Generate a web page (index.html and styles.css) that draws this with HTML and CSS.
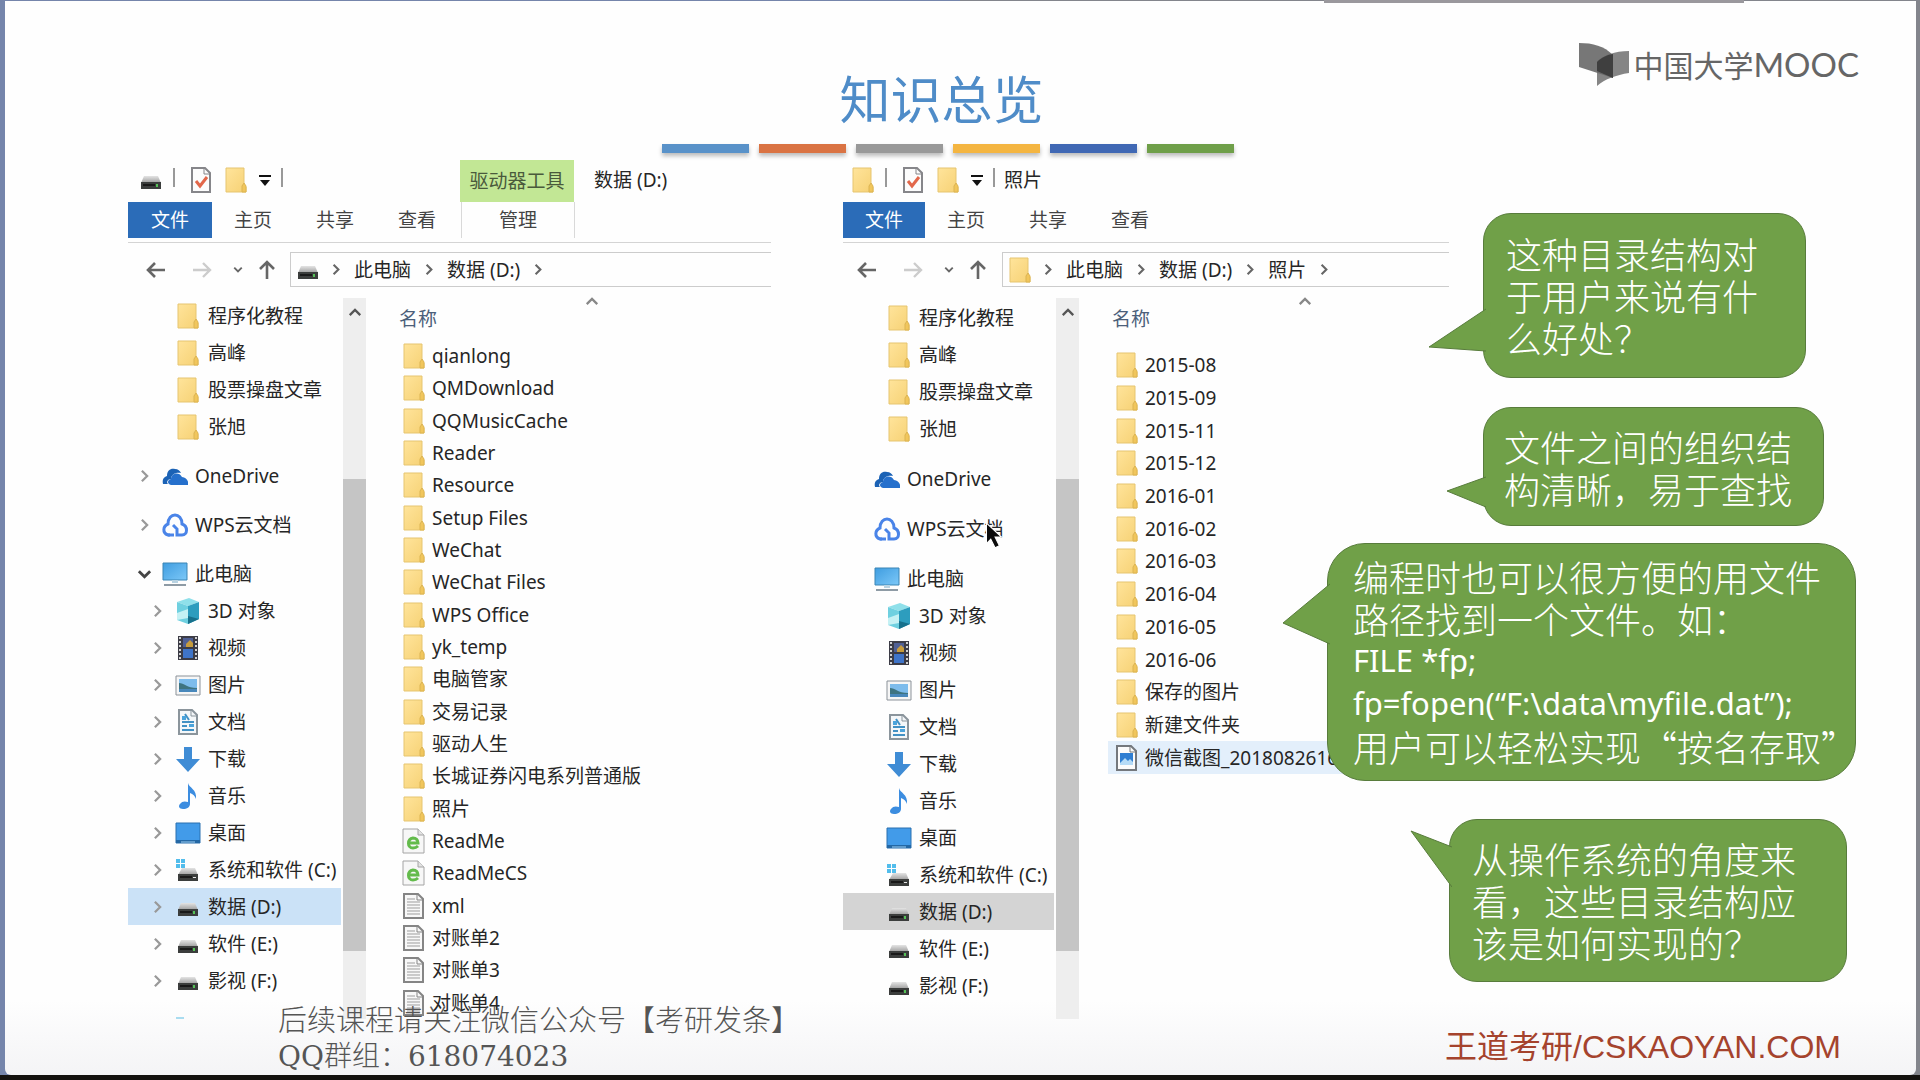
FILE: index.html
```html
<!DOCTYPE html>
<html lang="zh-CN">
<head>
<meta charset="utf-8">
<title>知识总览</title>
<link rel="stylesheet" href="styles.css">
</head>
<body>
<svg class="sprite" aria-hidden="true">
  <defs>
    <linearGradient id="gFolder" x1="0" x2="1" y1="0" y2="1"><stop offset="0" stop-color="#ffe49b"/><stop offset="1" stop-color="#f6d174"/></linearGradient>
    <linearGradient id="gScreen" x1="0" x2="1" y1="0" y2="1"><stop offset="0" stop-color="#3f9de0"/><stop offset="1" stop-color="#7cc8f8"/></linearGradient>
    <linearGradient id="gDrive" x1="0" x2="0" y1="0" y2="1"><stop offset="0" stop-color="#e4e4e4"/><stop offset="1" stop-color="#9c9c9c"/></linearGradient>
    <symbol id="folder" viewBox="0 0 26 26"><path d="M3 1h18v17l2 2v5H3z" fill="url(#gFolder)" stroke="#e6c571"/><path d="M19 25v-6l2-3 2 3v6z" fill="#f1c65c" stroke="#dcb452"/></symbol>
    <symbol id="drive" viewBox="0 0 26 26"><path d="M6 9h14l3 7H3z" fill="url(#gDrive)"/><path d="M3 15h20v7H3z" fill="#3b3d3c"/><path d="M5 17h12v2H5z" fill="#191919"/><path d="M18 17h2v3h-2z" fill="#55c257"/></symbol>
    <symbol id="sysdrive" viewBox="0 0 26 26"><path d="M1 2h4v4H1zM6 2h4v4H6zM1 7h4v4H1zM6 7h4v4H6z" fill="#52bdec"/><path d="M7 11h13l3 7H3z" fill="url(#gDrive)"/><path d="M3 17h20v7H3z" fill="#3b3d3c"/><path d="M5 19h12v2H5z" fill="#191919"/><path d="M18 20h3v1h-3z" fill="#e6e6e6"/></symbol>
    <symbol id="check" viewBox="0 0 26 26"><path d="M4 1h13l5 5v19H4z" fill="#fcfcfc" stroke="#86868a" stroke-width="2"/><path d="M16 1v6h6" fill="none" stroke="#86868a" stroke-width="1"/><path d="M8 14l4 5 7-9" fill="none" stroke="#e2674a" stroke-width="3"/></symbol>
    <symbol id="caret" viewBox="0 0 14 14"><path d="M1 3h12" stroke="#111" stroke-width="2"/><path d="M2 7h10l-5 6z" fill="#111"/></symbol>
    <symbol id="back" viewBox="0 0 20 20"><path d="M19 10H2M9 3l-7 7 7 7" fill="none" stroke="currentColor" stroke-width="2.6"/></symbol>
    <symbol id="fwd" viewBox="0 0 20 20"><path d="M1 10h17M11 3l7 7-7 7" fill="none" stroke="currentColor" stroke-width="2.4"/></symbol>
    <symbol id="up" viewBox="0 0 20 20"><path d="M10 19V2M3 9l7-7 7 7" fill="none" stroke="currentColor" stroke-width="2.6"/></symbol>
    <symbol id="right" viewBox="0 0 10 16"><path d="M2 2l6 6-6 6" fill="none" stroke="currentColor" stroke-width="2.6"/></symbol>
    <symbol id="down" viewBox="0 0 16 10"><path d="M2 2l6 6 6-6" fill="none" stroke="currentColor" stroke-width="3"/></symbol>
    <symbol id="top" viewBox="0 0 16 10"><path d="M2 8l6-6 6 6" fill="none" stroke="currentColor" stroke-width="2.6"/></symbol>
    <symbol id="onedrive" viewBox="0 0 26 26"><path d="M1 21c-1-5 1-7 4-8 0-6 4-8 8-7 3 0 5 2 6 4-6-1-10 2-10 6-3 0-5 3-3 5z" fill="#1b62b5"/><path d="M9 22c-4-1-4-5 0-6 0-6 8-8 11-2 4 0 7 4 6 8z" fill="#2670cc"/></symbol>
    <symbol id="wps" viewBox="0 0 26 26"><path d="M8 23H6c-6-2-5-9 0-11C6 0 20 0 20 12c6 2 6 11 0 11h-5v-6l-4-4" fill="none" stroke="#4a84e8" stroke-width="3"/><path d="M6 23h6" stroke="#4a84e8" stroke-width="3"/></symbol>
    <symbol id="pc" viewBox="0 0 26 26"><path d="M1 2h24v17H1z" fill="url(#gScreen)" stroke="#3a85b5"/><path d="M10 19h6v3h-6z" fill="#b9d3e2"/><path d="M2 23h22v2H2z" fill="#8e9ba5"/></symbol>
    <symbol id="cube" viewBox="0 0 26 26"><path d="M2 4l12-4 10 4-11 4z" fill="#8fe0ea"/><path d="M2 4l11 4v18L2 22z" fill="#6fd0e0"/><path d="M13 8l11-4v17l-11 5z" fill="#2d9dbe"/><path d="M2 15l11-4v9L2 22z" fill="#c5f1f4"/><path d="M13 18l11 3-11 5z" fill="#17718c"/></symbol>
    <symbol id="video" viewBox="0 0 26 26"><path d="M3 1h20v24H3z" fill="#3c3c46"/><path d="M8 3h10v9H8z" fill="#4f5f94"/><path d="M8 14h10v9H8z" fill="#3f74c8"/><path d="M11 9l4-4 3 3v4h-7z" fill="#c79c3c"/><path d="M5 2v22M21 2v22" stroke="#d2d2d2" stroke-width="2" stroke-dasharray="2 2"/></symbol>
    <symbol id="picture" viewBox="0 0 26 26"><path d="M1 4h24v19H1z" fill="#f6f6f6" stroke="#8b9299" stroke-width="1"/><path d="M4 7h18v13H4z" fill="#7dbcec"/><path d="M4 11c5 0 8 5 18 5v4H4z" fill="#3e7481"/><path d="M4 17h18v3H4z" fill="#4988bb"/></symbol>
    <symbol id="doc" viewBox="0 0 26 26"><path d="M4 1h13l5 5v19H4z" fill="#f4f7f9" stroke="#8b959c" stroke-width="2"/><path d="M16 1v6h6" fill="none" stroke="#8b959c"/><path d="M10 5l4 6M7 13h12M7 17h5M7 21h12" stroke="#4291c4" stroke-width="2"/><path d="M7 7h4v4H7zM14 15h5v3h-5z" fill="#4ba4dc"/></symbol>
    <symbol id="download" viewBox="0 0 26 26"><path d="M9 1h8v12h8L13 26 1 13h8z" fill="#3f8cd5"/></symbol>
    <symbol id="music" viewBox="0 0 26 26"><path d="M13 0c1 5 9 6 8 16-1-3-3-5-6-6v11c0 3-3 5-7 5s-5-3-3-5c2-3 5-3 8-2z" fill="#3c8de0"/></symbol>
    <symbol id="desktop" viewBox="0 0 26 26"><path d="M1 3h24v20H1z" fill="#429be9" stroke="#2a71b0"/><path d="M1 20h24v3H1z" fill="#2468a5"/><path d="M6 22h14" stroke="#9fd0f3"/></symbol>
    <symbol id="html" viewBox="0 0 26 26"><path d="M2 1h15l6 6v18H2z" fill="#f7f7f7" stroke="#a4a4a4"/><path d="M17 1v6h6" fill="#e3e3e3" stroke="#a4a4a4"/><path d="M8 15h9c0-3-2-5-5-5-6 1-6 10 0 10 2 0 4-1 5-2" fill="none" stroke="#63bb4b" stroke-width="3"/></symbol>
    <symbol id="text" viewBox="0 0 26 26"><path d="M3 1h14l5 5v19H3z" fill="#f8f8f8" stroke="#858585" stroke-width="2"/><path d="M16 1v6h6" fill="none" stroke="#858585"/><path d="M6 6h8M6 9h13M6 12h13M6 15h13M6 18h13M6 21h13" stroke="#9d9d9d"/></symbol>
    <symbol id="image" viewBox="0 0 26 26"><path d="M3 1h14l5 5v19H3z" fill="#fbfbfb" stroke="#74787d" stroke-width="2"/><path d="M16 1v6h6" fill="none" stroke="#74787d"/><path d="M6 8h13v12H6z" fill="#2f7ed2"/><path d="M6 18l5-5 3 3 2-2 3 3v3H6z" fill="#b5dbf7"/></symbol>
  </defs>
</svg>

<div class="slide">
  <div class="menu-edge"></div>
  <header class="head">
    <div class="heading">
      <h1>知识总览</h1>
      <div class="bars"><i class="c1"></i><i class="c2"></i><i class="c3"></i><i class="c4"></i><i class="c5"></i><i class="c6"></i></div>
    </div>
    <div class="logo">
      <svg viewBox="0 0 50 44" aria-hidden="true"><path d="M0 1c14 0 25 3 34 12v23L0 25z" fill="#777"/><path d="M18 44V20c6-7 18-11 32-11v22c-13 2-24 6-32 13z" fill="#666" fill-opacity=".8"/><path d="M18 29V20c4-4 9-7 16-8v24z" fill="#3f3f3f"/></svg>
      <span class="logo-cn">中国大学</span><span class="logo-en">MOOC</span>
    </div>
  </header>

  <main class="stage">
    <section class="explorer first">
      <div class="titlebar">
        <svg class="ic"><use href="#drive"/></svg><i class="sep"></i>
        <button class="plain" aria-label="属性"><svg class="ic"><use href="#check"/></svg></button>
        <button class="plain" aria-label="新建文件夹"><svg class="ic"><use href="#folder"/></svg></button>
        <button class="plain" aria-label="自定义"><svg class="caret"><use href="#caret"/></svg></button><i class="sep"></i>
        <span class="context">驱动器工具</span>
        <span class="wtitle">数据 (D:)</span>
      </div>
      <nav class="tabs">
        <button class="file">文件</button><button>主页</button><button>共享</button><button>查看</button><button class="manage">管理</button>
      </nav>
      <div class="addressbar">
        <div class="navs">
          <button class="plain" aria-label="后退"><svg class="arrow"><use href="#back"/></svg></button>
          <button class="plain off" aria-label="前进"><svg class="arrow"><use href="#fwd"/></svg></button>
          <button class="plain recent" aria-label="最近"><svg class="mini"><use href="#down"/></svg></button>
          <button class="plain" aria-label="上移"><svg class="arrow"><use href="#up"/></svg></button>
        </div>
        <div class="path">
          <svg class="ic"><use href="#drive"/></svg><svg class="chev"><use href="#right"/></svg>
          <a href="#pc">此电脑</a><svg class="chev"><use href="#right"/></svg>
          <a href="#d">数据 (D:)</a><svg class="chev"><use href="#right"/></svg>
        </div>
      </div>
      <div class="body">
        <ul class="tree">
          <li class="l2"><a href="#t"><i class="tw"></i><svg class="ic"><use href="#folder"/></svg>程序化教程</a></li>
          <li class="l2"><a href="#t"><i class="tw"></i><svg class="ic"><use href="#folder"/></svg>高峰</a></li>
          <li class="l2"><a href="#t"><i class="tw"></i><svg class="ic"><use href="#folder"/></svg>股票操盘文章</a></li>
          <li class="l2"><a href="#t"><i class="tw"></i><svg class="ic"><use href="#folder"/></svg>张旭</a></li>
          <li class="group"><a href="#t"><svg class="tw"><use href="#right"/></svg><svg class="ic"><use href="#onedrive"/></svg>OneDrive</a></li>
          <li class="group"><a href="#t"><svg class="tw"><use href="#right"/></svg><svg class="ic"><use href="#wps"/></svg>WPS云文档</a></li>
          <li class="group"><a href="#t"><svg class="tw open"><use href="#down"/></svg><svg class="ic"><use href="#pc"/></svg>此电脑</a></li>
          <li class="l2"><a href="#t"><svg class="tw"><use href="#right"/></svg><svg class="ic"><use href="#cube"/></svg>3D 对象</a></li>
          <li class="l2"><a href="#t"><svg class="tw"><use href="#right"/></svg><svg class="ic"><use href="#video"/></svg>视频</a></li>
          <li class="l2"><a href="#t"><svg class="tw"><use href="#right"/></svg><svg class="ic"><use href="#picture"/></svg>图片</a></li>
          <li class="l2"><a href="#t"><svg class="tw"><use href="#right"/></svg><svg class="ic"><use href="#doc"/></svg>文档</a></li>
          <li class="l2"><a href="#t"><svg class="tw"><use href="#right"/></svg><svg class="ic"><use href="#download"/></svg>下载</a></li>
          <li class="l2"><a href="#t"><svg class="tw"><use href="#right"/></svg><svg class="ic"><use href="#music"/></svg>音乐</a></li>
          <li class="l2"><a href="#t"><svg class="tw"><use href="#right"/></svg><svg class="ic"><use href="#desktop"/></svg>桌面</a></li>
          <li class="l2"><a href="#t"><svg class="tw"><use href="#right"/></svg><svg class="ic"><use href="#sysdrive"/></svg>系统和软件 (C:)</a></li>
          <li class="l2 selected"><a href="#t"><svg class="tw"><use href="#right"/></svg><svg class="ic"><use href="#drive"/></svg>数据 (D:)</a></li>
          <li class="l2"><a href="#t"><svg class="tw"><use href="#right"/></svg><svg class="ic"><use href="#drive"/></svg>软件 (E:)</a></li>
          <li class="l2"><a href="#t"><svg class="tw"><use href="#right"/></svg><svg class="ic"><use href="#drive"/></svg>影视 (F:)</a></li>
          <li class="clipped"></li>
        </ul>
        <div class="scroll"><svg class="small"><use href="#top"/></svg><i class="thumb"></i></div>
        <div class="files">
          <div class="colhead"><span>名称</span><svg class="small"><use href="#top"/></svg></div>
          <ul class="list">
            <li><a href="#f"><svg class="ic"><use href="#folder"/></svg>qianlong</a></li>
            <li><a href="#f"><svg class="ic"><use href="#folder"/></svg>QMDownload</a></li>
            <li><a href="#f"><svg class="ic"><use href="#folder"/></svg>QQMusicCache</a></li>
            <li><a href="#f"><svg class="ic"><use href="#folder"/></svg>Reader</a></li>
            <li><a href="#f"><svg class="ic"><use href="#folder"/></svg>Resource</a></li>
            <li><a href="#f"><svg class="ic"><use href="#folder"/></svg>Setup Files</a></li>
            <li><a href="#f"><svg class="ic"><use href="#folder"/></svg>WeChat</a></li>
            <li><a href="#f"><svg class="ic"><use href="#folder"/></svg>WeChat Files</a></li>
            <li><a href="#f"><svg class="ic"><use href="#folder"/></svg>WPS Office</a></li>
            <li><a href="#f"><svg class="ic"><use href="#folder"/></svg>yk_temp</a></li>
            <li><a href="#f"><svg class="ic"><use href="#folder"/></svg>电脑管家</a></li>
            <li><a href="#f"><svg class="ic"><use href="#folder"/></svg>交易记录</a></li>
            <li><a href="#f"><svg class="ic"><use href="#folder"/></svg>驱动人生</a></li>
            <li><a href="#f"><svg class="ic"><use href="#folder"/></svg>长城证券闪电系列普通版</a></li>
            <li><a href="#f"><svg class="ic"><use href="#folder"/></svg>照片</a></li>
            <li><a href="#f"><svg class="ic"><use href="#html"/></svg>ReadMe</a></li>
            <li><a href="#f"><svg class="ic"><use href="#html"/></svg>ReadMeCS</a></li>
            <li><a href="#f"><svg class="ic"><use href="#text"/></svg>xml</a></li>
            <li><a href="#f"><svg class="ic"><use href="#text"/></svg>对账单2</a></li>
            <li><a href="#f"><svg class="ic"><use href="#text"/></svg>对账单3</a></li>
            <li><a href="#f"><svg class="ic"><use href="#text"/></svg>对账单4</a></li>
          </ul>
        </div>
      </div>
    </section>

    <section class="explorer second">
      <div class="titlebar">
        <svg class="ic"><use href="#folder"/></svg><i class="sep"></i>
        <button class="plain" aria-label="属性"><svg class="ic"><use href="#check"/></svg></button>
        <button class="plain" aria-label="新建文件夹"><svg class="ic"><use href="#folder"/></svg></button>
        <button class="plain" aria-label="自定义"><svg class="caret"><use href="#caret"/></svg></button><i class="sep"></i>
        <span class="wtitle">照片</span>
      </div>
      <nav class="tabs">
        <button class="file">文件</button><button>主页</button><button>共享</button><button>查看</button>
      </nav>
      <div class="addressbar">
        <div class="navs">
          <button class="plain" aria-label="后退"><svg class="arrow"><use href="#back"/></svg></button>
          <button class="plain off" aria-label="前进"><svg class="arrow"><use href="#fwd"/></svg></button>
          <button class="plain recent" aria-label="最近"><svg class="mini"><use href="#down"/></svg></button>
          <button class="plain" aria-label="上移"><svg class="arrow"><use href="#up"/></svg></button>
        </div>
        <div class="path">
          <svg class="ic"><use href="#folder"/></svg><svg class="chev"><use href="#right"/></svg>
          <a href="#pc">此电脑</a><svg class="chev"><use href="#right"/></svg>
          <a href="#d">数据 (D:)</a><svg class="chev"><use href="#right"/></svg>
          <a href="#p">照片</a><svg class="chev"><use href="#right"/></svg>
        </div>
      </div>
      <div class="body">
        <ul class="tree">
          <li class="l2"><a href="#t"><i class="tw"></i><svg class="ic"><use href="#folder"/></svg>程序化教程</a></li>
          <li class="l2"><a href="#t"><i class="tw"></i><svg class="ic"><use href="#folder"/></svg>高峰</a></li>
          <li class="l2"><a href="#t"><i class="tw"></i><svg class="ic"><use href="#folder"/></svg>股票操盘文章</a></li>
          <li class="l2"><a href="#t"><i class="tw"></i><svg class="ic"><use href="#folder"/></svg>张旭</a></li>
          <li class="group"><a href="#t"><i class="tw"></i><svg class="ic"><use href="#onedrive"/></svg>OneDrive</a></li>
          <li class="group"><a href="#t"><i class="tw"></i><svg class="ic"><use href="#wps"/></svg>WPS云文档</a>
            <svg class="cursor" viewBox="0 0 16 26" aria-hidden="true"><path d="M1 1v19l4-4 4 8 4-2-4-8h6z" fill="#0b0b0b" stroke="#fff"/></svg></li>
          <li class="group"><a href="#t"><i class="tw"></i><svg class="ic"><use href="#pc"/></svg>此电脑</a></li>
          <li class="l2"><a href="#t"><i class="tw"></i><svg class="ic"><use href="#cube"/></svg>3D 对象</a></li>
          <li class="l2"><a href="#t"><i class="tw"></i><svg class="ic"><use href="#video"/></svg>视频</a></li>
          <li class="l2"><a href="#t"><i class="tw"></i><svg class="ic"><use href="#picture"/></svg>图片</a></li>
          <li class="l2"><a href="#t"><i class="tw"></i><svg class="ic"><use href="#doc"/></svg>文档</a></li>
          <li class="l2"><a href="#t"><i class="tw"></i><svg class="ic"><use href="#download"/></svg>下载</a></li>
          <li class="l2"><a href="#t"><i class="tw"></i><svg class="ic"><use href="#music"/></svg>音乐</a></li>
          <li class="l2"><a href="#t"><i class="tw"></i><svg class="ic"><use href="#desktop"/></svg>桌面</a></li>
          <li class="l2"><a href="#t"><i class="tw"></i><svg class="ic"><use href="#sysdrive"/></svg>系统和软件 (C:)</a></li>
          <li class="l2 selected"><a href="#t"><i class="tw"></i><svg class="ic"><use href="#drive"/></svg>数据 (D:)</a></li>
          <li class="l2"><a href="#t"><i class="tw"></i><svg class="ic"><use href="#drive"/></svg>软件 (E:)</a></li>
          <li class="l2"><a href="#t"><i class="tw"></i><svg class="ic"><use href="#drive"/></svg>影视 (F:)</a></li>
        </ul>
        <div class="scroll"><svg class="small"><use href="#top"/></svg><i class="thumb"></i></div>
        <div class="files">
          <div class="colhead"><span>名称</span><svg class="small"><use href="#top"/></svg></div>
          <ul class="list">
            <li><a href="#f"><svg class="ic"><use href="#folder"/></svg>2015-08</a></li>
            <li><a href="#f"><svg class="ic"><use href="#folder"/></svg>2015-09</a></li>
            <li><a href="#f"><svg class="ic"><use href="#folder"/></svg>2015-11</a></li>
            <li><a href="#f"><svg class="ic"><use href="#folder"/></svg>2015-12</a></li>
            <li><a href="#f"><svg class="ic"><use href="#folder"/></svg>2016-01</a></li>
            <li><a href="#f"><svg class="ic"><use href="#folder"/></svg>2016-02</a></li>
            <li><a href="#f"><svg class="ic"><use href="#folder"/></svg>2016-03</a></li>
            <li><a href="#f"><svg class="ic"><use href="#folder"/></svg>2016-04</a></li>
            <li><a href="#f"><svg class="ic"><use href="#folder"/></svg>2016-05</a></li>
            <li><a href="#f"><svg class="ic"><use href="#folder"/></svg>2016-06</a></li>
            <li><a href="#f"><svg class="ic"><use href="#folder"/></svg>保存的图片</a></li>
            <li><a href="#f"><svg class="ic"><use href="#folder"/></svg>新建文件夹</a></li>
            <li class="selected"><a href="#f"><svg class="ic"><use href="#image"/></svg>微信截图_2018082616</a></li>
          </ul>
        </div>
      </div>
    </section>

    <aside class="callouts">
      <div class="callout a"><svg class="tail" viewBox="0 0 58 44" aria-hidden="true"><path d="M58 1L1 39l57 4" /></svg><p>这种目录结构对<br>于用户来说有什<br>么好处？</p></div>
      <div class="callout b"><svg class="tail" viewBox="0 0 40 32" aria-hidden="true"><path d="M40 1L1 15l39 16"/></svg><p>文件之间的组织结<br>构清晰，易于查找</p></div>
      <div class="callout c"><svg class="tail" viewBox="0 0 48 62" aria-hidden="true"><path d="M48 1L1 40l47 21"/></svg><p>编程时也可以很方便的用文件<br>路径找到一个文件。如：</p><p class="code">FILE *fp;<br>fp=fopen(“F:\data\myfile.dat”);</p><p>用户可以轻松实现“按名存取”</p></div>
      <div class="callout d"><svg class="tail" viewBox="0 0 42 58" aria-hidden="true"><path d="M42 17L1 1l41 56"/></svg><p>从操作系统的角度来<br>看，这些目录结构应<br>该是如何实现的？</p></div>
    </aside>
  </main>

  <footer class="foot">
    <div class="notice"><p class="follow">后续课程请关注微信公众号【考研发条】</p><p>QQ群组：618074023</p></div>
    <p class="site">王道考研/CSKAOYAN.COM</p>
  </footer>
</div>
</body>
</html>
```
FILE: styles.css
```css
* { box-sizing: border-box; }
body {
  margin: 0;
  min-height: 100vh;
  display: flex;
  padding: 1px 4px 5px 5px;
  background: linear-gradient(to bottom, transparent calc(100% - 5px), #14120f 0),
    linear-gradient(to right, #7585ab 50%, #83858c 0);
  font: 19px/24px "Noto Sans", "Noto Sans CJK SC", sans-serif;
  color: #262626;
}
ul, p, h1 { margin: 0; padding: 0; }
ul { list-style: none; }
a { color: inherit; text-decoration: none; }
button { border: 0; padding: 0; background: none; font: inherit; color: inherit; }
svg { display: block; flex: none; }
.sprite { position: absolute; width: 0; height: 0; }
.ic { width: 26px; height: 26px; }
.small { width: 14px; height: 9px; }
.mini { width: 10px; height: 7px; }
.arrow { width: 20px; height: 20px; }
.caret { width: 14px; height: 14px; }
.chev { width: 8px; height: 13px; color: #666; }

.slide {
  position: relative;
  flex: 1;
  display: flex;
  flex-direction: column;
  background: linear-gradient(to bottom, #fefefe 93%, #f4f4f6);
  border-radius: 0 0 6px 6px;
}
.menu-edge { position: absolute; top: -1px; left: 69%; width: 22%; height: 3px; background: #9a989d; }

.head {
  display: grid;
  grid-template-columns: 1fr auto 1fr;
  height: 159px;
  padding: 41px 57px 0 31px;
}
.heading { grid-column: 2; padding-top: 25px; }
h1 { font-size: 51px; line-height: 64px; font-weight: 400; color: #4f8cc8; text-align: center; padding-right: 12px; }
.bars { display: flex; gap: 10px; margin-top: 13px; }
.bars i { width: 87px; height: 9px; box-shadow: 0 3px 4px #bbb; }
.c1 { background: #5992c9; }
.c2 { background: #da7343; }
.c3 { background: #999; }
.c4 { background: #f4b541; }
.c5 { background: #4068b4; }
.c6 { background: #6f9f49; }
.logo { grid-column: 3; justify-self: end; display: flex; align-items: center; height: 44px; color: #666; }
.logo svg { width: 50px; height: 44px; margin-right: 4px; }
.logo-cn { font: 30px/44px "Noto Sans CJK SC", sans-serif; }
.logo-en { font: 33px/44px Lato, sans-serif; }

.stage {
  flex: 1;
  display: grid;
  grid-template-columns: 123fr 643fr 72fr 438fr 168fr 467fr;
}
.first { grid-area: 1 / 2; }
.second { grid-area: 1 / 4 / 2 / 6; }
.callouts { grid-area: 1 / 5 / 2 / 7; }
.explorer { display: flex; flex-direction: column; min-width: 0; white-space: nowrap; }

.titlebar { display: flex; align-items: center; height: 42px; padding: 0 0 3px 10px; gap: 9px; }
.titlebar .sep { width: 2px; height: 19px; margin: 0 4px 4px 0; background: #999; }
.context { align-self: stretch; width: 114px; margin: 0 0 -3px 164px; background: #c2e795; color: #4a5a3c; line-height: 42px; text-align: center; }
.context + .wtitle { margin-left: 11px; }
.second .titlebar { padding-left: 7px; }
.second .wtitle { margin-left: -4px; }

.tabs { display: flex; height: 41px; padding-bottom: 4px; border-bottom: 1px solid #d4d4d4; color: #444; }
.tabs button { width: 82px; }
.tabs .file { width: 84px; background: #2b6cb8; color: #fff; }
.tabs .manage { width: 114px; margin-left: 3px; border: solid #d9d9d9; border-width: 0 1px; }
.second .tabs .file { width: 82px; }

.addressbar { display: flex; height: 54px; padding: 9px 0 10px; }
.navs { width: 162px; display: flex; align-items: center; padding-left: 18px; gap: 26px; color: #666; }
.navs .off { color: #ccc; }
.navs .recent { margin: 0 -12px 0 -5px; }
.second .navs { width: 159px; padding-left: 14px; }
.path { flex: 1; display: flex; align-items: center; gap: 14px; padding-left: 4px; border: 1px solid #ccc; border-right: 0; }
.path .ic { margin-right: -3px; }

.body { flex: 1; display: flex; }
.tree { width: 213px; }
.tree li { position: relative; height: 37px; }
.tree a { display: flex; align-items: center; height: 100%; padding-left: 12px; }
.tree .l2 a { padding-left: 25px; }
.tree .group { margin-top: 12px; }
.tree .tw { width: 9px; height: 14px; margin-right: 13px; color: #999; }
.tree .ic { margin-right: 7px; }
.tree .open { width: 15px; height: 10px; margin: 0 10px 0 -3px; color: #444; }
.tree .selected { background: #cbe2f7; }
.tree .clipped { width: 8px; height: 2px; margin: 18px 0 0 48px; background: #a9dcf0; }
.second .tree { width: 211px; padding-top: 2px; }
.second .tree .group { margin-top: 13px; }
.second .tree a { padding-left: 9px; }
.second .tree .l2 a { padding-left: 21px; }
.second .tree .selected { background: #d4d4d4; }
.cursor { position: absolute; left: 142px; top: 12px; width: 18px; height: 28px; }

.scroll { width: 23px; margin: 1px 1px 0 2px; padding-top: 10px; background: #eee; display: flex; flex-direction: column; align-items: center; color: #555; }
.thumb { width: 23px; height: 472px; margin-top: 162px; background: #c5c5c5; }

.files { flex: 1; min-width: 0; display: flex; flex-direction: column; padding-left: 28px; }
.colhead { display: flex; height: 43px; padding-left: 4px; color: #4c607a; line-height: 44px; }
.colhead .small { margin-left: 148px; color: #888; }
.list { flex: 1; display: grid; grid-auto-rows: 1fr; }
.list a { display: flex; align-items: center; height: 100%; padding-left: 6px; gap: 5px; }
.second .colhead { height: 52px; }
.second .list { flex: none; min-height: 425px; }
.list .selected { background: #e3effb; }

.callouts { position: relative; padding-top: 53px; display: flex; flex-direction: column; align-items: flex-start; }
.callout { position: relative; background: #70a048; border: 1px solid #587c3c; border-radius: 28px; color: #fff; font: 300 36px/42px "Noto Sans CJK SC", sans-serif; white-space: nowrap; }
.callout .code { font: 31px/43px "Noto Sans", sans-serif; }
.tail { position: absolute; fill: #70a048; stroke: #587c3c; }
.a { margin-left: 202px; width: 323px; height: 165px; padding: 18px 22px; }
.b { margin: 29px 0 0 202px; width: 341px; height: 119px; padding: 17px 20px; }
.c { margin: 17px 0 0 46px; width: 529px; height: 238px; padding: 11px 25px; border-radius: 38px; }
.d { margin: 38px 0 0 168px; width: 398px; height: 163px; padding: 17px 22px; }
.a .tail { right: 100%; top: 94px; width: 58px; height: 44px; margin-right: -2px; }
.b .tail { right: 100%; top: 68px; width: 40px; height: 32px; margin-right: -2px; }
.c .tail { right: 100%; top: 39px; width: 48px; height: 62px; margin-right: -2px; }
.d .tail { right: 100%; top: 10px; width: 42px; height: 58px; margin-right: -2px; }

.foot { position: relative; display: flex; justify-content: space-between; align-items: flex-end; height: 56px; padding: 0 75px 0 273px; }
.notice { font: 300 28px/36px "DejaVu Serif", "Noto Sans CJK SC", serif; color: #555; }
.follow { font-size: 29px; }
.site { font: 32px/56px "Liberation Sans", "Noto Sans CJK SC", sans-serif; color: #a5432d; }
```
